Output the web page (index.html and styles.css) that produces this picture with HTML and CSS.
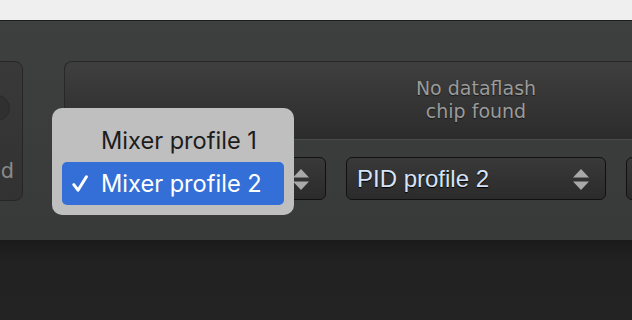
FILE: index.html
```html
<!DOCTYPE html>
<html lang="en">
<head>
  <meta charset="UTF-8">
  <meta name="viewport" content="width=device-width, initial-scale=1.0">
  <title>Configurator - Profiles</title>
  <link rel="stylesheet" href="styles.css">
</head>
<body>
  <div class="titlebar"></div>

  <header class="toolbar">
    <div class="status-card">
      <span class="dial"></span>
      <span class="status-label">Disarmed</span>
    </div>

    <div class="toolbar-main">
      <div class="dataflash">No dataflash<br>chip found</div>

      <div class="profiles">
        <div class="select">
          <span class="select-value">Mixer profile 2</span>
          <svg class="select-arrows" width="16" height="21" viewBox="0 0 16 21"><path d="M8 0 L16 8.5 L0 8.5 Z M0 12.5 L16 12.5 L8 21 Z"/></svg>
        </div>
        <div class="select">
          <span class="select-value">PID profile 2</span>
          <svg class="select-arrows" width="16" height="21" viewBox="0 0 16 21"><path d="M8 0 L16 8.5 L0 8.5 Z M0 12.5 L16 12.5 L8 21 Z"/></svg>
        </div>
        <div class="select">
          <span class="select-value">Battery profile 1</span>
          <svg class="select-arrows" width="16" height="21" viewBox="0 0 16 21"><path d="M8 0 L16 8.5 L0 8.5 Z M0 12.5 L16 12.5 L8 21 Z"/></svg>
        </div>
      </div>
    </div>

    <!-- open dropdown of the mixer profile select -->
    <ul class="menu">
      <li class="menu-item">Mixer profile 1</li>
      <li class="menu-item selected">
        <svg class="check" width="16" height="17" viewBox="0 0 16 17"><path d="M1.8 9.6 L6 15.2 L14.4 1.8"/></svg>
        Mixer profile 2
      </li>
    </ul>
  </header>

  <div class="content"></div>
</body>
</html>
```

FILE: styles.css
```css
html, body {
  margin: 0;
  padding: 0;
}
body {
  width: 632px;
  height: 320px;
  overflow: hidden;
  background-color: #232323;
  font-family: "DejaVu Sans", sans-serif;
}
.titlebar {
  height: 20px;
  background-color: #efefef;
  border-bottom: 1px solid #1e1e1e;
}
.toolbar {
  position: relative;
  display: flex;
  align-items: flex-start;
  box-sizing: border-box;
  height: 219px;
  padding-top: 40px;
  background: linear-gradient(#3e403f, #383a39);
}
.status-card {
  display: flex;
  flex-direction: column;
  flex-shrink: 0;
  box-sizing: border-box;
  width: 140px;
  height: 140px;
  margin-left: -117px;
  padding-bottom: 16px;
  border: 1px solid #262626;
  border-radius: 8px;
  background: linear-gradient(#393939, #323232);
}
.dial {
  display: block;
  width: 24px;
  height: 24px;
  margin: 33px 0 0 100px;
  border: 1px solid #2a2a2a;
  border-radius: 50%;
  background-color: #303030;
}
.status-label {
  margin-top: auto;
  padding-right: 8px;
  text-align: right;
  font-size: 21px;
  line-height: 25px;
  color: #8a8a8a;
  white-space: nowrap;
}
.toolbar-main {
  flex-shrink: 0;
  width: 824px;
  margin-left: 41px;
}
.dataflash {
  box-sizing: border-box;
  height: 79px;
  padding-top: 15px;
  border: 1px solid #282828;
  border-bottom-color: #4a4a4a;
  border-radius: 8px 8px 0 0;
  background: linear-gradient(#3f3f3f, #2c2c2c);
  text-align: center;
  font-size: 19px;
  line-height: 23px;
  color: #9b9b9b;
  text-shadow: 0 1px 1px #1a1a1a;
}
.profiles {
  display: flex;
  gap: 20px;
  margin-top: 17px;
  padding-left: 2px;
}
.select {
  display: flex;
  align-items: center;
  justify-content: space-between;
  flex-shrink: 0;
  box-sizing: border-box;
  width: 260px;
  height: 43px;
  padding: 1px 16px 0 10px;
  border: 1px solid #111;
  border-radius: 6px;
  background: linear-gradient(#393939, #2b2b2b);
}
.select-value {
  font-family: "Liberation Sans", Arial, sans-serif;
  font-size: 24px;
  color: #d5e4f8;
  text-shadow: 0 1px 1px #000;
  white-space: nowrap;
}
.select-arrows {
  display: block;
  fill: #a9a9a9;
}
.menu {
  position: absolute;
  left: 52px;
  top: 87px;
  box-sizing: border-box;
  width: 242px;
  margin: 0;
  padding: 11px 10px 10px;
  list-style: none;
  border-radius: 10px;
  background-color: #bfbfbf;
}
.menu-item {
  display: flex;
  align-items: center;
  height: 43px;
  padding-left: 39px;
  font-family: Inter, "Noto Sans", sans-serif;
  font-size: 23.6px;
  color: #1d1d1d;
  white-space: nowrap;
}
.menu-item.selected {
  padding-left: 10px;
  border-radius: 5px;
  background-color: #336fd6;
  color: #fff;
}
.check {
  display: block;
  margin-right: 13px;
  fill: none;
  stroke: #fff;
  stroke-width: 3;
  stroke-linecap: round;
  stroke-linejoin: round;
}
.content {
  height: 80px;
  background: linear-gradient(#1a1a1a, #222 22px, #232323);
}
```
